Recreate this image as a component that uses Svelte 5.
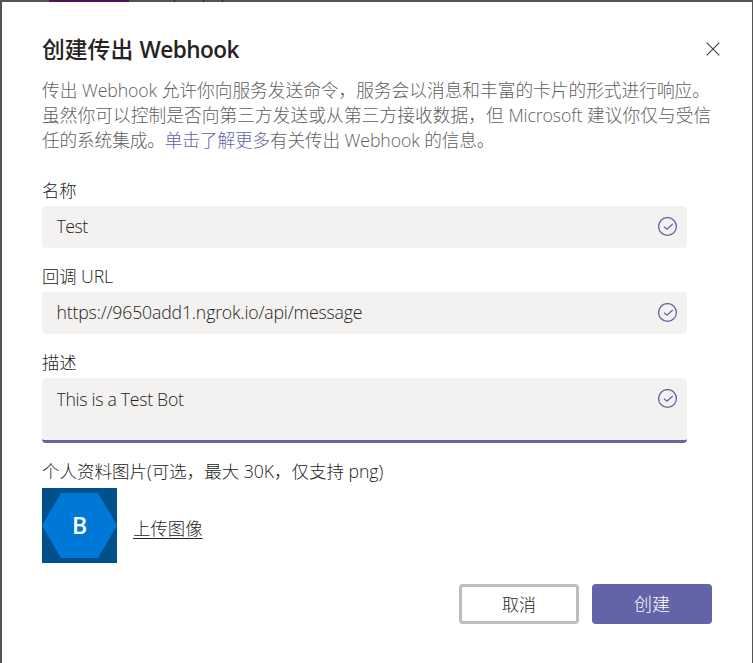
<script>
  let name = $state('Test');
  let url = $state('https://9650add1.ngrok.io/api/message');
  let description = $state('This is a Test Bot');
</script>

{#snippet check()}
  <svg class="check" width="20" height="20" viewBox="0 0 20 20" aria-hidden="true">
    <circle cx="9.5" cy="9.5" r="8.9" />
    <path d="M6 9.7 L9 12.2 L14.7 7" />
  </svg>
{/snippet}

<div class="backdrop">
  <div class="app-bar"><i class="accent"></i><i class="tick a"></i><i class="tick b"></i><i class="tick c"></i></div>
  <main class="dialog">
    <header>
      <h1>创建传出 <span class="lat">Webhook</span></h1>
      <button class="close" aria-label="关闭">
        <svg width="14" height="14" viewBox="0 0 14 14"><path d="M.7 .7 L13.3 13.3 M13.3 .7 L.7 13.3" /></svg>
      </button>
    </header>
    <p class="intro">
      <span class="line">传出 <span class="lat">Webhook</span> 允许你向服务发送命令，服务会以消息和丰富的卡片的形式进行响应。</span>
      <span class="line second">虽然你可以控制是否向第三方发送或从第三方接收数据，但 <span class="lat">Microsoft</span> 建议你仅与受信</span>
      <span class="line third">任的系统集成。<a href="#more">单击了解更多</a>有关传出 <span class="lat">Webhook</span> 的信息。</span>
    </p>

    <label for="name">名称</label>
    <div class="field"><input id="name" class="short" bind:value={name} />{@render check()}</div>
    <label for="url">回调 <span class="lat">URL</span></label>
    <div class="field"><input id="url" bind:value={url} />{@render check()}</div>
    <label for="description">描述</label>
    <div class="field tall"><textarea id="description" bind:value={description}></textarea>{@render check()}</div>

    <div class="caption">个人资料图片(可选，最大 <span class="lat">30K</span>，仅支持 <span class="lat">png)</span></div>
    <div class="picture">
      <div class="avatar">
        <svg width="75" height="75" viewBox="0 0 75 75"><path d="M19 5 H56 L75 37.5 L56 70 H19 L0 37.5 Z" /></svg>
        <b>B</b>
      </div>
      <a class="upload" href="#upload">上传图像</a>
    </div>
    <footer>
      <button class="cancel">取消</button>
      <button class="create">创建</button>
    </footer>
  </main>
</div>

<style>
  :global(body) { margin: 0; overflow: hidden; }
  * { box-sizing: border-box; }
  .backdrop {
    width: 753px; height: 663px; background: #555354; padding: 0 1px 0 2px;
    font-family: "Open Sans", "Noto Sans CJK SC", sans-serif; color: #252423;
    font-size: 17.3px;
  }
  .app-bar { height: 2px; display: flex; }
  .accent { width: 80px; margin-left: 47px; background: #4f1150; }
  .tick { width: 1px; background: #222; }
  .a { margin-left: 45px; } .b { margin-left: 28px; } .c { margin-left: 18px; }
  .dialog { height: 661px; background: #fff; padding: 31px 40px 0; }
  header { display: flex; justify-content: space-between; height: 44px; margin-right: -9px; }
  h1 { margin: 0; font-size: 22.8px; line-height: 34px; font-weight: 500; white-space: nowrap; }
  h1 .lat { font-weight: 600; font-size: 22.6px; letter-spacing: -.6px; margin-left: .5px; }
  button { font: inherit; padding: 0; cursor: pointer; }
  .close { width: 14px; height: 14px; margin: 9px 1px 0 0; border: 0; background: none; display: flex; }
  .close path { stroke: #484644; stroke-width: 1.2; fill: none; }
  .intro { margin: 0; padding-top: 1px; color: #605e5c; font-size: 17.7px; font-weight: 300; height: 101px; }
  .line { display: block; line-height: 25px; white-space: nowrap; }
  .second { letter-spacing: .07px; }
  .third { letter-spacing: -.15px; }
  .lat { font-weight: 300; font-size: 17.7px; letter-spacing: -.1px; }
  a { color: #6264a7; text-decoration: none; }
  label { display: block; height: 28px; line-height: 25px; font-weight: 300; }
  .field { width: 645px; height: 42px; margin-bottom: 16px; background: #f3f2f1; border-radius: 4px; display: flex; padding: 0 9px 0 14.5px; }
  input, textarea { flex: 1; min-width: 0; border: 0; outline: 0; background: none; padding: 0 0 2px; margin: 0; font: inherit; font-size: 17.7px; font-weight: 300; color: inherit; letter-spacing: -.18px; resize: none; }
  .short { letter-spacing: -.5px; }
  textarea { padding-top: 9px; line-height: 24px; overflow: hidden; letter-spacing: -.3px; }
  .check { margin-top: 11px; fill: none; stroke: #6264a7; stroke-width: 1.3; }
  .tall { height: 65px; border-bottom: 3px solid #6264a7; }
  .caption { height: 29px; line-height: 25px; font-size: 17.5px; font-weight: 300; white-space: nowrap; }
  .picture { display: flex; height: 75px; gap: 16px; }
  .avatar { width: 75px; height: 75px; background: #00508b; display: grid; place-items: center; }
  .avatar > * { grid-area: 1 / 1; }
  .avatar path { fill: #0078d7; }
  b { color: #fff; font-size: 23px; font-weight: 600; line-height: 30px; padding-bottom: 1px; }
  .upload { color: #252423; font-weight: 300; font-size: 17.4px; line-height: 24px; margin-top: 28px; text-decoration: underline; text-underline-offset: 3px; }
  footer { display: flex; gap: 13px; justify-content: flex-end; margin-top: 21px; }
  footer button { width: 120px; height: 40px; border-radius: 4px; font-size: 17px; font-weight: 300; padding-bottom: 2px; }
  .cancel { background: #fff; border: 3px solid #bdbdbd; color: #252423; }
  .create { background: #6264a7; border: 0; color: #fff; font-size: 18px; }
</style>
